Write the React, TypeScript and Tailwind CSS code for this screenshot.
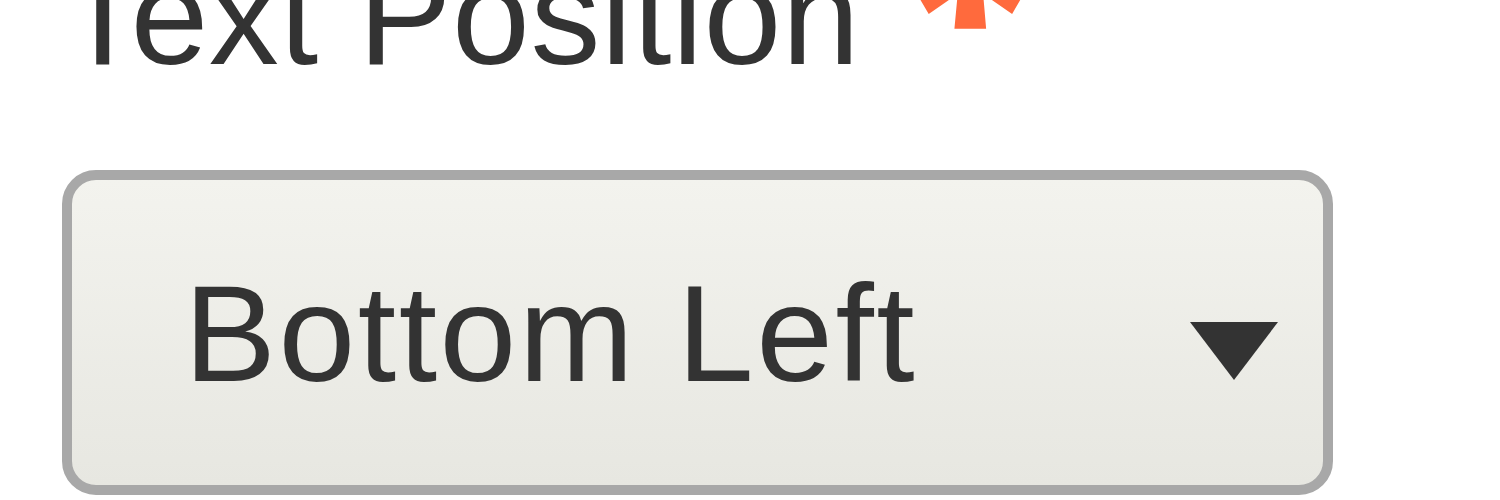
import React from 'react';

export default function App() {
  return (
    <div className="w-[1500px] h-[500px] overflow-hidden bg-white font-['Liberation_Sans',Arial,sans-serif] text-[#333333]">
      {/* Field label, top is cropped */}
      <div className="flex items-start mt-[-54px] ml-[60px] h-[140px]">
        <span className="text-[140px] leading-none tracking-[0.5px]">Text Position</span>
        <span className="h-0 w-[120px] ml-[25px] mt-[-69px] text-center text-[280px] leading-none font-black font-['Inter',sans-serif] text-[#ff6a3d]">*</span>
      </div>

      {/* Select box */}
      <div className="mt-[84px] ml-[62px] w-[1271px] h-[325px] border-[10px] border-[#a8a8a8] rounded-[34px] bg-gradient-to-b from-[#f3f3ee] to-[#e7e7e1] flex items-center justify-between pt-0 pl-[112px] pr-[45px]">
        <span className="text-[138px] leading-none tracking-[2.5px]">Bottom Left</span>
        <svg width="88" height="58" viewBox="0 0 88 58" className="mt-[37px]">
          <polygon points="0,0 88,0 44,58" fill="#333333" />
        </svg>
      </div>
    </div>
  );
}
